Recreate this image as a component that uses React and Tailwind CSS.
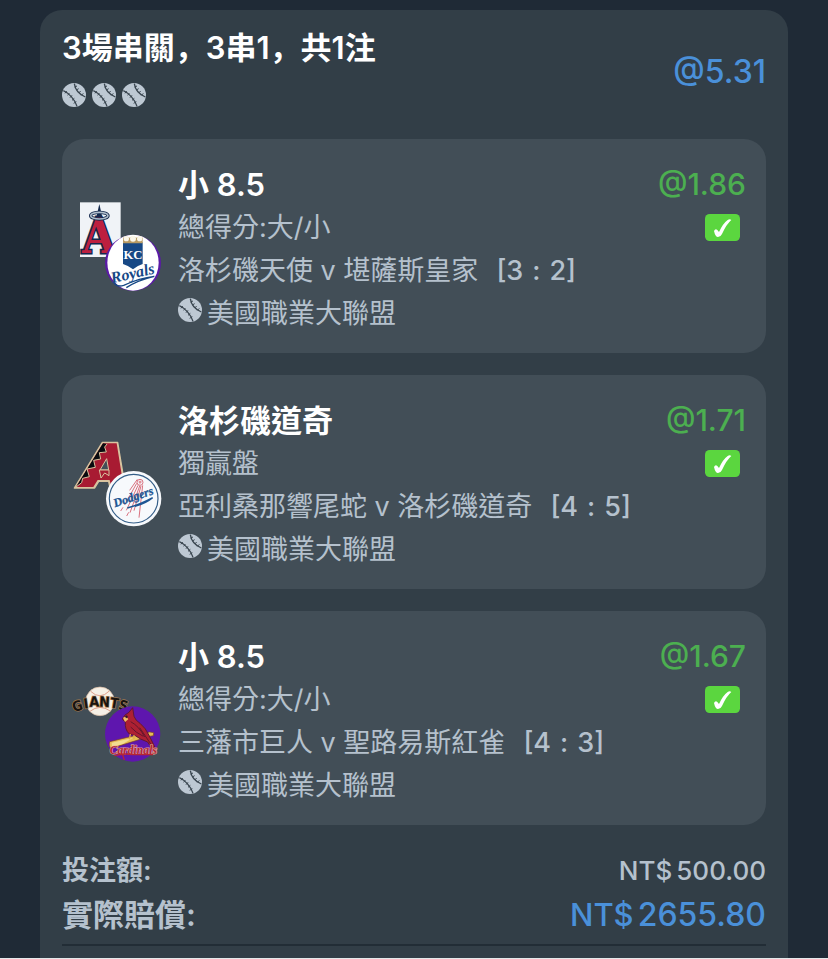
import React from "react";

function Baseball() {
  return (
    <svg viewBox="0 0 72 72" className="size-6 shrink-0" aria-hidden="true">
      <circle cx="36" cy="36" r="36" fill="#bdc8d3" />
      <g fill="none" stroke="#39454f">
        <path d="M4 23C20 30 38 48 45 70" strokeWidth="4" />
        <path d="M37 2C39 18 52 34 70 42" strokeWidth="4" />
        <path
          d="M9 31L14 24M17 37L22 30M24 44L30 37M30 52L37 46M35 61L43 56M38 12L45 9M43 21L50 17M50 30L56 24M58 37L64 31"
          strokeWidth="3"
        />
      </g>
    </svg>
  );
}

function AngelsRoyals() {
  return (
    <svg viewBox="0 0 330 330" className="size-[110px]" aria-hidden="true">
      <rect x="45" y="37" width="122" height="164" fill="#f0f3f7" />
      <path d="M103 42L116 100H90Z" fill="#12284b" />
      <text
        x="101"
        y="190"
        textAnchor="middle"
        fontSize="144"
        fill="#bd1f3f"
        stroke="#14284d"
        strokeWidth="9"
        paintOrder="stroke"
        className="font-['DejaVu_Serif_Condensed','DejaVu_Serif',serif] font-bold"
      >
        A
      </text>
      <ellipse cx="103" cy="77" rx="26" ry="10" fill="none" stroke="#14284d" strokeWidth="10" />
      <ellipse cx="103" cy="77" rx="26" ry="10" fill="none" stroke="#aebdcb" strokeWidth="5" />
      <circle cx="204" cy="219" r="84" fill="#5a1aa6" />
      <ellipse cx="204" cy="218" rx="77" ry="84" fill="#fff" />
      <path d="M174 157H233V222Q219 226 204 238Q188 226 174 222Z" fill="#174885" />
      <path d="M174 143L184 139L194 143L204 138L214 143L224 139L233 143V160H174Z" fill="#b99b64" />
      <g fill="#fbf7ea">
        <circle cx="184" cy="146" r="8" />
        <circle cx="204" cy="146" r="9" />
        <circle cx="224" cy="146" r="8" />
      </g>
      <text
        x="204"
        y="207"
        textAnchor="middle"
        fontSize="38"
        fill="#fff"
        className="font-['Liberation_Serif',serif] font-bold"
      >
        KC
      </text>
      <text
        x="141"
        y="280"
        fontSize="48"
        fill="#174885"
        transform="rotate(-13 141 280)"
        className="font-['Liberation_Serif',serif] font-bold italic"
      >
        Royals
      </text>
      <path d="M147 279Q158 292 176 286Q224 264 268 259Q217 271 184 293" fill="none" stroke="#174885" strokeWidth="4" />
    </svg>
  );
}

function DiamondbacksDodgers() {
  return (
    <svg viewBox="0 -12 330 330" className="size-[110px]" aria-hidden="true">
      <path d="M112 37H158L181 174H135L131 154H101L89 174H28Z" fill="#d9c4a0" stroke="#d9c4a0" strokeWidth="4" strokeLinejoin="round" />
      <path d="M114 40H155L176 171H139L134 150H98L85 171H33Z" fill="#a81b32" />
      <path d="M114 40L126 42L119 51L124 66L103 68L107 87L86 91L91 112L66 117L73 140L53 145L50 158L33 171Z" fill="#080b0f" />
      <path d="M126 42L119 51L124 66L103 68L107 87L86 91L91 112L66 117L73 140L53 145L50 158L33 171" fill="none" stroke="#d9c4a0" strokeWidth="3" />
      <path d="M125 86L131 120H105Z" fill="#424e58" stroke="#d9c4a0" strokeWidth="3" />
      <path d="M103 120H132V137L119 129L108 144Z" fill="#a81b32" stroke="#d9c4a0" strokeWidth="3" />
      <circle cx="206" cy="206" r="83" fill="#f7f9fc" />
      <circle cx="206" cy="206" r="73" fill="none" stroke="#345e88" strokeWidth="3.5" />
      <g fill="none" stroke="#d9717f" strokeWidth="3">
        <circle cx="225" cy="157" r="9" />
        <path d="M221 156H230M225 152V161" />
        <path d="M215 160L179 225M219 166L184 241M224 168L195 248M228 168L207 242M233 166L222 263M217 148L194 181M174 232L167 243M191 247L185 258" />
      </g>
      <text
        x="150"
        y="232"
        fontSize="36"
        fill="#1d5593"
        stroke="#1d5593"
        transform="rotate(-19 150 232)"
        className="font-['Liberation_Serif',serif] font-bold italic"
      >
        Dodgers
      </text>
      <path d="M187 234Q224 224 263 203Q243 220 210 229" fill="none" stroke="#1d5593" strokeWidth="4" />
    </svg>
  );
}

const giants = [
  ["G", 41, 122, -16],
  ["I", 65, 115, -8],
  ["A", 88, 110, -2],
  ["N", 118, 110, 3],
  ["T", 146, 114, 9],
  ["S", 171, 121, 16],
];

function GiantsCardinals() {
  return (
    <svg viewBox="0 -24 330 330" className="size-[110px]" aria-hidden="true">
      <circle cx="105" cy="94" r="43" fill="#f6f0e6" stroke="#d9b9a0" strokeWidth="2" />
      <path d="M77 64Q105 91 133 63M75 124Q104 101 136 123" fill="none" stroke="#e0a08b" strokeWidth="3" />
      <g
        className="font-['DejaVu_Sans_Condensed','DejaVu_Sans',sans-serif] font-bold"
        fontSize="42"
        textAnchor="middle"
        fill="#17130f"
        stroke="#a67a4e"
        strokeWidth="4"
        paintOrder="stroke"
      >
        {giants.map(([letter, x, y, turn]) => (
          <text key={letter} x={x} y={y} transform={`rotate(${turn} ${x} ${y})`}>
            {letter}
          </text>
        ))}
      </g>
      <circle cx="203" cy="192" r="83" fill="#5e16ae" />
      <path d="M134 215L254 186L266 188L265 197L254 199L139 235Q130 231 134 215Z" fill="#e6bd55" stroke="#80421f" strokeWidth="2" />
      <path d="M140 218L205 203L173 222L141 231Z" fill="#f3dd91" />
      <path
        d="M203 113L207 139Q211 151 225 160Q243 175 252 196Q262 215 272 237L261 236L248 216Q225 208 211 197L193 192Q179 178 181 157L172 147L180 135Q192 130 203 113Z"
        fill="#ad2033"
        stroke="#5f1835"
        strokeWidth="3"
      />
      <path d="M174 143L184 139L190 148L180 156Z" fill="#efbd68" />
      <path d="M180 139L186 136L189 142L183 145Z" fill="#31162b" />
      <path d="M197 155Q222 168 239 201M197 171Q212 188 235 199M224 173L260 226" fill="none" stroke="#64162b" strokeWidth="3" />
      <path d="M196 192L193 208M207 195L207 207" stroke="#e2ad48" strokeWidth="4" />
      <text
        x="134"
        y="251"
        fontSize="35"
        fill="#b52535"
        stroke="#e9b4a4"
        strokeWidth="3"
        paintOrder="stroke"
        className="font-['Liberation_Serif',serif] font-bold italic"
      >
        Cardinals
      </text>
      <path d="M148 257Q176 249 204 254H264M173 254L178 270" fill="none" stroke="#b52535" strokeWidth="4" />
    </svg>
  );
}

function WonMark() {
  return (
    <svg viewBox="0 0 105 81" className="h-[27px] w-[35px]" role="img" aria-label="✓">
      <rect width="105" height="81" rx="14" fill="#5bd63f" />
      <path d="M27 51Q31 43 37 48L42 54Q54 28 68 18Q74 13 79 18Q64 31 51 60Q47 69 39 69Q31 69 27 51Z" fill="#fff" />
    </svg>
  );
}

const bets = [
  { pick: "小 8.5", market: "總得分:大/小", match: "洛杉磯天使 v 堪薩斯皇家", score: ["[3", ":", "2]"], odds: "@1.86", Logo: AngelsRoyals },
  { pick: "洛杉磯道奇", market: "獨贏盤", match: "亞利桑那響尾蛇 v 洛杉磯道奇", score: ["[4", ":", "5]"], odds: "@1.71", Logo: DiamondbacksDodgers },
  { pick: "小 8.5", market: "總得分:大/小", match: "三藩市巨人 v 聖路易斯紅雀", score: ["[4", ":", "3]"], odds: "@1.67", Logo: GiantsCardinals },
];

function BetCard({ bet }) {
  const { Logo } = bet;
  return (
    <article className="flex rounded-[22px] bg-[#424e57] pt-6 pr-5 pb-[18px] pl-[3px] text-[27px] leading-[43px] text-[#b5c1cd]">
      <div className="w-[113px] shrink-0 pt-[27px]">
        <Logo />
      </div>
      <div className="min-w-0 grow">
        <h2 className="text-[31px] leading-[43px] font-semibold text-white">{bet.pick}</h2>
        <p>{bet.market}</p>
        <p className="flex gap-[18px] whitespace-nowrap">
          <span>{bet.match}</span>
          <span className="flex gap-[9px] font-medium">
            {bet.score.map((part) => (
              <span key={part}>{part}</span>
            ))}
          </span>
        </p>
        <p className="flex items-center gap-[5px]">
          <span className="pb-2">
            <Baseball />
          </span>
          美國職業大聯盟
        </p>
      </div>
      <div className="flex shrink-0 flex-col items-end">
        <p className="text-[30px] leading-[43px] font-medium text-[#4caf50]">{bet.odds}</p>
        <div className="flex h-[43px] items-center pr-[6px]">
          <WonMark />
        </div>
      </div>
    </article>
  );
}

export default function App() {
  return (
    <main className="border-b border-[#e5e8ea] bg-[#1f2a36] px-10 pt-[10px] font-[Inter,'Noto_Sans_CJK_TC',sans-serif]">
      <section className="rounded-t-[22px] bg-[#323e47] px-[22px] pt-4 pb-3">
        <header className="flex items-center justify-between pb-[22px]">
          <div className="pb-[10px]">
            <h1 className="font-[Inter,'Noto_Sans_CJK_SC',sans-serif] text-[31px] leading-[44px] font-semibold text-white">
              3場串關，3串1，共1注
            </h1>
            <div className="flex gap-[6px] pt-[13px]">
              <Baseball />
              <Baseball />
              <Baseball />
            </div>
          </div>
          <p className="text-[32px] leading-[44px] font-medium text-[#4a90d9]">@5.31</p>
        </header>
        <div className="flex flex-col gap-[22px]">
          {bets.map((bet) => (
            <BetCard key={bet.match} bet={bet} />
          ))}
        </div>
        <dl className="border-b-2 border-[#222d36] pt-6 pb-[7px] text-[#b5c1cd]">
          <div className="flex justify-between text-[27px] leading-[44px]">
            <dt className="font-semibold">投注額:</dt>
            <dd className="flex gap-1 text-[26px] font-medium">
              <span>NT$</span>
              <span>500.00</span>
            </dd>
          </div>
          <div className="flex justify-between text-[31px] leading-[44px]">
            <dt className="font-semibold">實際賠償:</dt>
            <dd className="flex items-baseline gap-1 font-medium text-[#4a90d9]">
              <span>NT$</span>
              <span className="text-[32px]">2655.80</span>
            </dd>
          </div>
        </dl>
      </section>
    </main>
  );
}
